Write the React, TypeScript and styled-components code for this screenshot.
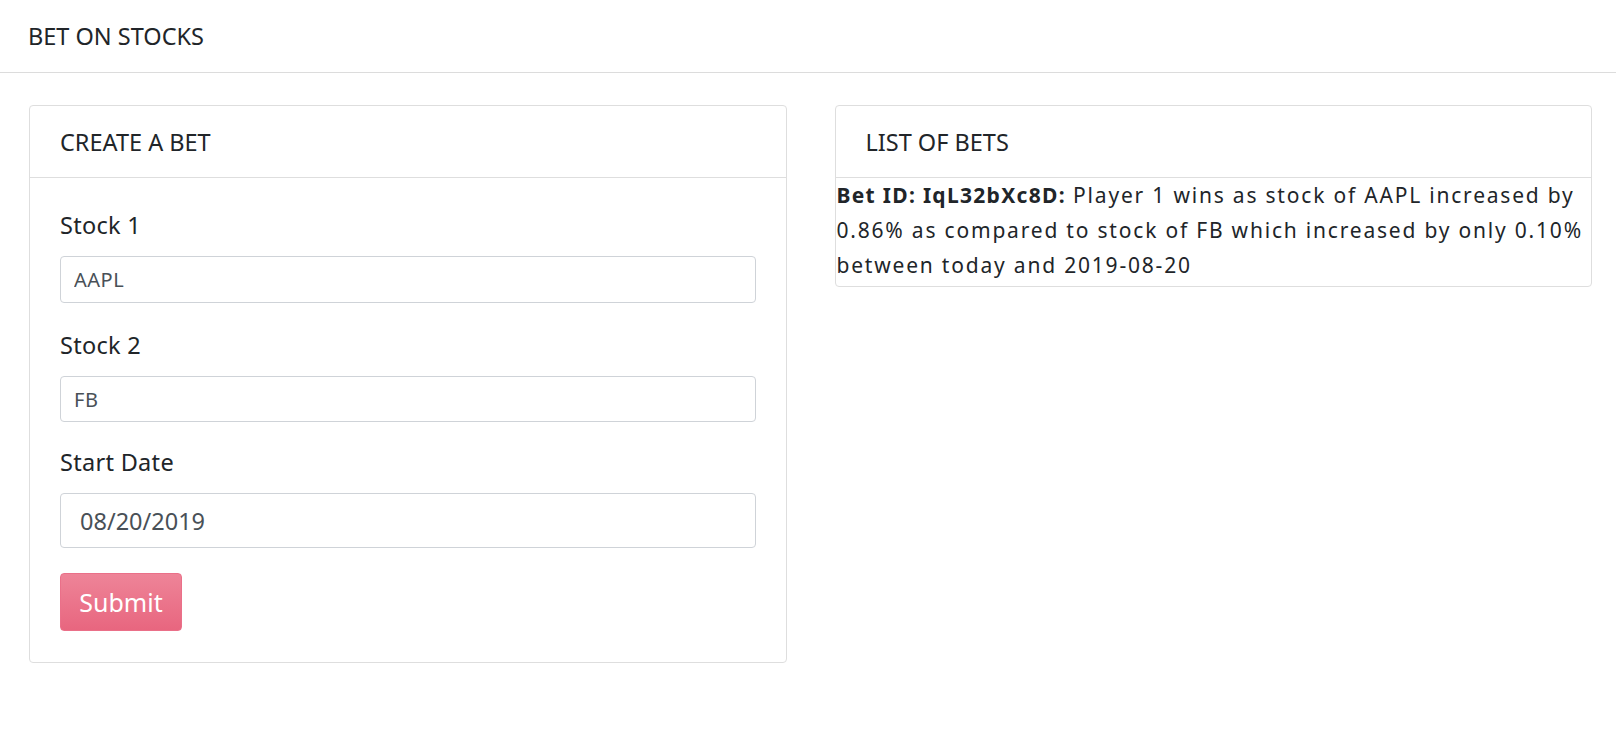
import React from "react";
import styled, { createGlobalStyle } from "styled-components";

const GlobalStyle = createGlobalStyle`
  html, body { margin: 0; padding: 0; background: #ffffff; }
  body { font-family: "Noto Sans", "Open Sans", sans-serif; color: #212529; }
  * { box-sizing: border-box; }
`;

const NavBar = styled.header`
  height: 73px;
  border-bottom: 1px solid #dcdcdc;
  display: flex;
  align-items: center;
  padding: 0 28px;
`;

const Brand = styled.div`
  font-size: 23.5px;
  color: #212529;
`;

const Main = styled.main`
  display: grid;
  grid-template-columns: 1fr 1fr;
  column-gap: 48px;
  align-items: start;
  padding: 32px 24px 0 29px;
`;

const Card = styled.section`
  border: 1px solid #dedede;
  border-radius: 4px;
  background: #fff;
`;

const CardHeader = styled.div`
  height: 72px;
  border-bottom: 1px solid #dedede;
  display: flex;
  align-items: center;
  padding: 0 30px;
  font-size: 23.5px;
  color: #212529;
`;

const FormBody = styled.form`
  padding: 32px 30px 31px 30px;
`;

const FormGroup = styled.div<{ $gap: number }>`
  display: flex;
  flex-direction: column;
  margin-bottom: ${(p) => p.$gap}px;
`;

const Label = styled.label`
  font-size: 23.5px;
  line-height: 30px;
  letter-spacing: 0.3px;
  margin-bottom: 16px;
  color: #212529;
`;

const Input = styled.input<{ $h: number; $fs: number; $pl: number; $ls: number }>`
  height: ${(p) => p.$h}px;
  width: 100%;
  border: 1px solid #cfd3d8;
  border-radius: 4px;
  padding: 0 ${(p) => p.$pl}px;
  font-family: "Noto Sans", "Open Sans", sans-serif;
  font-size: ${(p) => p.$fs}px;
  letter-spacing: ${(p) => p.$ls}px;
  color: #495057;
  background: #fff;
  outline: none;
`;

const SubmitButton = styled.button`
  width: 122px;
  height: 58px;
  border: 1px solid #ea7089;
  border-radius: 4px;
  background: linear-gradient(180deg, #ee8498 0%, #e8667f 100%);
  color: #fff;
  font-family: "Noto Sans", "Open Sans", sans-serif;
  font-size: 25px;
  padding: 0;
  cursor: pointer;
`;

const BetList = styled.div`
  padding: 0 0 3px 1px;
  font-size: 21px;
  line-height: 35px;
  letter-spacing: 1.8px;
  color: #212529;
`;

const BetItem = styled.p`
  margin: 0;
`;

const Strong = styled.strong`
  font-weight: 700;
  letter-spacing: 1.3px;
`;

export default function App() {
  return (
    <>
      <GlobalStyle />
      <NavBar>
        <Brand>BET ON STOCKS</Brand>
      </NavBar>
      <Main>
        <Card>
          <CardHeader>CREATE A BET</CardHeader>
          <FormBody onSubmit={(e) => e.preventDefault()}>
            <FormGroup $gap={27}>
              <Label>Stock 1</Label>
              <Input $h={47} $fs={20} $pl={13} $ls={0.5} defaultValue="AAPL" />
            </FormGroup>
            <FormGroup $gap={25}>
              <Label>Stock 2</Label>
              <Input $h={46} $fs={20} $pl={13} $ls={0.5} defaultValue="FB" />
            </FormGroup>
            <FormGroup $gap={25}>
              <Label>Start Date</Label>
              <Input $h={55} $fs={23.5} $pl={19} $ls={0} defaultValue="08/20/2019" />
            </FormGroup>
            <SubmitButton type="submit">Submit</SubmitButton>
          </FormBody>
        </Card>
        <Card>
          <CardHeader>LIST OF BETS</CardHeader>
          <BetList>
            <BetItem>
              <Strong>Bet ID: IqL32bXc8D:</Strong> Player 1 wins as stock of AAPL increased by 0.86% as compared to stock of FB which increased by only 0.10% between today and 2019-08-20
            </BetItem>
          </BetList>
        </Card>
      </Main>
    </>
  );
}
